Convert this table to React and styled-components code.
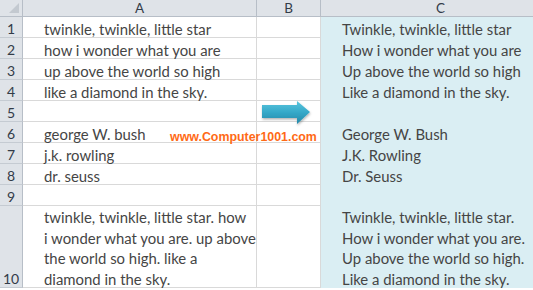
import React from "react";
import styled, { createGlobalStyle } from "styled-components";

const Global = createGlobalStyle`
  html, body {
    margin: 0;
    padding: 0;
    background: #fff;
    overflow: hidden;
  }
`;

const Sheet = styled.div`
  position: relative;
  width: 533px;
  height: 290px;
  display: grid;
  grid-template-columns: 23px 234px 64px 240px;
  grid-template-rows: 17px repeat(9, 21px) 82px;
  font-family: Lato, "Open Sans", sans-serif;
  color: #464646;
  overflow: hidden;
`;

const Corner = styled.div`
  position: relative;
  background: #dfe3e8;
  border-right: 1px solid #b7bec7;
  border-bottom: 1px solid #b7bec7;
  &::after {
    content: '';
    position: absolute;
    right: 3px;
    bottom: 3px;
    width: 0;
    height: 0;
    border-left: 10px solid transparent;
    border-bottom: 10px solid #c3c9d0;
  }
`;

const ColHead = styled.div`
  background: #dfe3e8;
  border-right: 1px solid #b7bec7;
  border-bottom: 1px solid #b7bec7;
  display: flex;
  align-items: center;
  justify-content: center;
  padding-top: 1px;
  font-size: 13.5px;
  color: #333c48;
  line-height: 1;
`;

const RowHead = styled.div`
  background: #dfe3e8;
  border-right: 1px solid #b7bec7;
  border-bottom: 1px solid #c5cbd2;
  display: flex;
  flex-direction: column;
  justify-content: flex-end;
  align-items: center;
  font-size: 14px;
  color: #333c48;
  line-height: 20.5px;
`;

const Cell = styled.div`
  background: ${p => (p.$fill ? "#daeef3" : "#fff")};
  border-right: 1px solid ${p => (p.$fill ? "#daeef3" : "#d9d9d9")};
  border-bottom: 1px solid ${p => (p.$fill ? "#daeef3" : "#d9d9d9")};
  display: flex;
  flex-direction: column;
  justify-content: flex-end;
  padding-left: 21px;
  font-size: 14.9px;
  line-height: 20.5px;
  white-space: nowrap;
  color: #454545;
`;

const Line = styled.div`
  margin-bottom: ${p => (p.$last ? "-2px" : "0")};
`;

const Watermark = styled.div`
  position: absolute;
  left: 170px;
  top: 130px;
  font-family: "Liberation Sans", Arial, sans-serif;
  font-weight: bold;
  font-size: 12.4px;
  color: #ff6a16;
  white-space: nowrap;
`;

const ArrowWrap = styled.svg`
  position: absolute;
  left: 260px;
  top: 99px;
`;

const Arrow = () => (
  <ArrowWrap width="54" height="30" viewBox="0 0 54 30">
    <defs>
      <linearGradient id="ag" x1="0" y1="0" x2="0" y2="1">
        <stop offset="0" stopColor="#5cc6de" />
        <stop offset="0.5" stopColor="#34a8c8" />
        <stop offset="1" stopColor="#2488a8" />
      </linearGradient>
      <filter id="sh" x="-20%" y="-20%" width="140%" height="160%">
        <feDropShadow dx="0.5" dy="1.5" stdDeviation="1" floodColor="#000" floodOpacity="0.3" />
      </filter>
    </defs>
    <path d="M2 6 H37 V2 L50 13 L37 25 V19 H2 Z" fill="url(#ag)" filter="url(#sh)" />
  </ArrowWrap>
);

const left = [
  "twinkle, twinkle, little star",
  "how i wonder what you are",
  "up above the world so high",
  "like a diamond in the sky.",
  "",
  "george W. bush",
  "j.k. rowling",
  "dr. seuss",
  "",
];

const right = [
  "Twinkle, twinkle, little star",
  "How i wonder what you are",
  "Up above the world so high",
  "Like a diamond in the sky.",
  "",
  "George W. Bush",
  "J.K. Rowling",
  "Dr. Seuss",
  "",
];

const leftLast = [
  "twinkle, twinkle, little star. how",
  "i wonder what you are. up above",
  "the world so high. like a",
  "diamond in the sky.",
];

const rightLast = [
  "Twinkle, twinkle, little star.",
  "How i wonder what you are.",
  "Up above the world so high.",
  "Like a diamond in the sky.",
];

const Lines = ({ lines }) =>
  lines.map((l, i) => (
    <Line key={i} $last={i === lines.length - 1}>{l || "\u00a0"}</Line>
  ));

export default function App() {
  return (
    <>
      <Global />
      <Sheet>
        <Corner />
        <ColHead>A</ColHead>
        <ColHead>B</ColHead>
        <ColHead>C</ColHead>
        {left.map((t, i) => (
          <React.Fragment key={i}>
            <RowHead><Lines lines={[String(i + 1)]} /></RowHead>
            <Cell><Lines lines={[t]} /></Cell>
            <Cell />
            <Cell $fill><Lines lines={[right[i]]} /></Cell>
          </React.Fragment>
        ))}
        <RowHead><Lines lines={["10"]} /></RowHead>
        <Cell><Lines lines={leftLast} /></Cell>
        <Cell />
        <Cell $fill><Lines lines={rightLast} /></Cell>
        <Arrow />
        <Watermark>www.Computer1001.com</Watermark>
      </Sheet>
    </>
  );
}
